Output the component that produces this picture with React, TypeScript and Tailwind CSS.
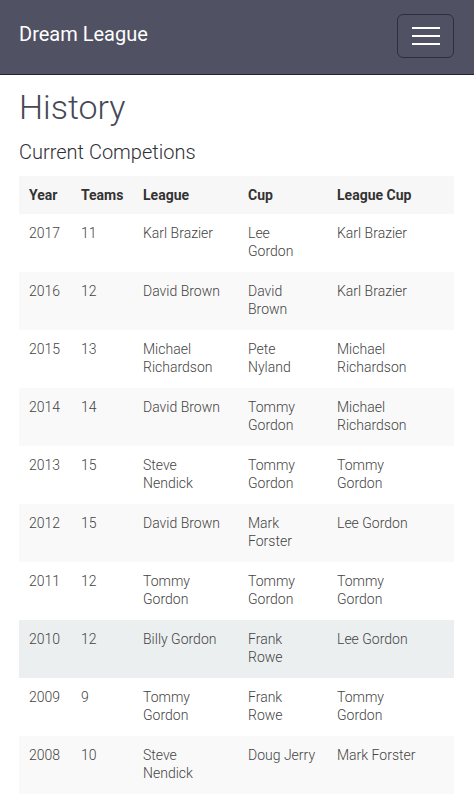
import React from "react"

// line breaks follow the wrapping in the original table
const rows = [
    ["2017", "11", "Karl Brazier", "Lee\nGordon", "Karl Brazier"],
    ["2016", "12", "David Brown", "David\nBrown", "Karl Brazier"],
    ["2015", "13", "Michael\nRichardson", "Pete\nNyland", "Michael\nRichardson"],
    ["2014", "14", "David Brown", "Tommy\nGordon", "Michael\nRichardson"],
    ["2013", "15", "Steve\nNendick", "Tommy\nGordon", "Tommy\nGordon"],
    ["2012", "15", "David Brown", "Mark\nForster", "Lee Gordon"],
    ["2011", "12", "Tommy\nGordon", "Tommy\nGordon", "Tommy\nGordon"],
    ["2010", "12", "Billy Gordon", "Frank\nRowe", "Lee Gordon"],
    ["2009", "9", "Tommy\nGordon", "Frank\nRowe", "Tommy\nGordon"],
    ["2008", "10", "Steve\nNendick", "Doug Jerry", "Mark Forster"],
]

const App = () => {
    return (
        <div className="min-h-[800px] bg-white" style={{ fontFamily: "Roboto, 'Noto Sans', sans-serif" }}>
            <nav className="h-[75px] bg-[#505163] border-b border-[#23232e] flex items-center justify-between pl-[19px] pr-[20px]">
                <span className="text-white text-[20px] leading-6 -mt-[7px]">Dream League</span>
                <button className="w-[57px] h-[44px] rounded-md border border-[#2e2f3b] flex flex-col items-center justify-center gap-[6px] -mt-[2px]">
                    <span className="block w-[28px] h-[2px] bg-white" />
                    <span className="block w-[28px] h-[2px] bg-white" />
                    <span className="block w-[28px] h-[2px] bg-white" />
                </button>
            </nav>
            <div className="px-[19px]">
                <h1 className="mt-[12px] text-[34px] leading-[41px] font-light text-[#474857]">History</h1>
                <h2 className="mt-[12px] text-[20px] leading-6 font-light text-[#2f2f36]">Current Competions</h2>
                <table className="mt-[12px] w-[435px] table-fixed border-collapse text-[14px] leading-[18px]">
                    <colgroup>
                        <col className="w-[52px]" />
                        <col className="w-[62px]" />
                        <col className="w-[105px]" />
                        <col className="w-[89px]" />
                        <col className="w-[127px]" />
                    </colgroup>
                    <thead>
                        <tr className="bg-[#f7f7f7]">
                            {["Year", "Teams", "League", "Cup", "League Cup"].map((h) => (
                                <th key={h} className="text-left font-bold text-[#333] px-[10px] py-[10px] align-top">{h}</th>
                            ))}
                        </tr>
                    </thead>
                    <tbody>
                        {rows.map((r, i) => (
                            <tr key={r[0]} className={r[0] === "2010" ? "bg-[#eceff0]" : i % 2 === 1 ? "bg-[#f9f9f9]" : "bg-white"}>
                                {r.map((c, j) => (
                                    <td key={j} className="px-[10px] py-[10px] h-[58px] align-top whitespace-pre-line text-[#444] font-light">
                                        {c}
                                    </td>
                                ))}
                            </tr>
                        ))}
                    </tbody>
                </table>
            </div>
        </div>
    )
}

export default App
